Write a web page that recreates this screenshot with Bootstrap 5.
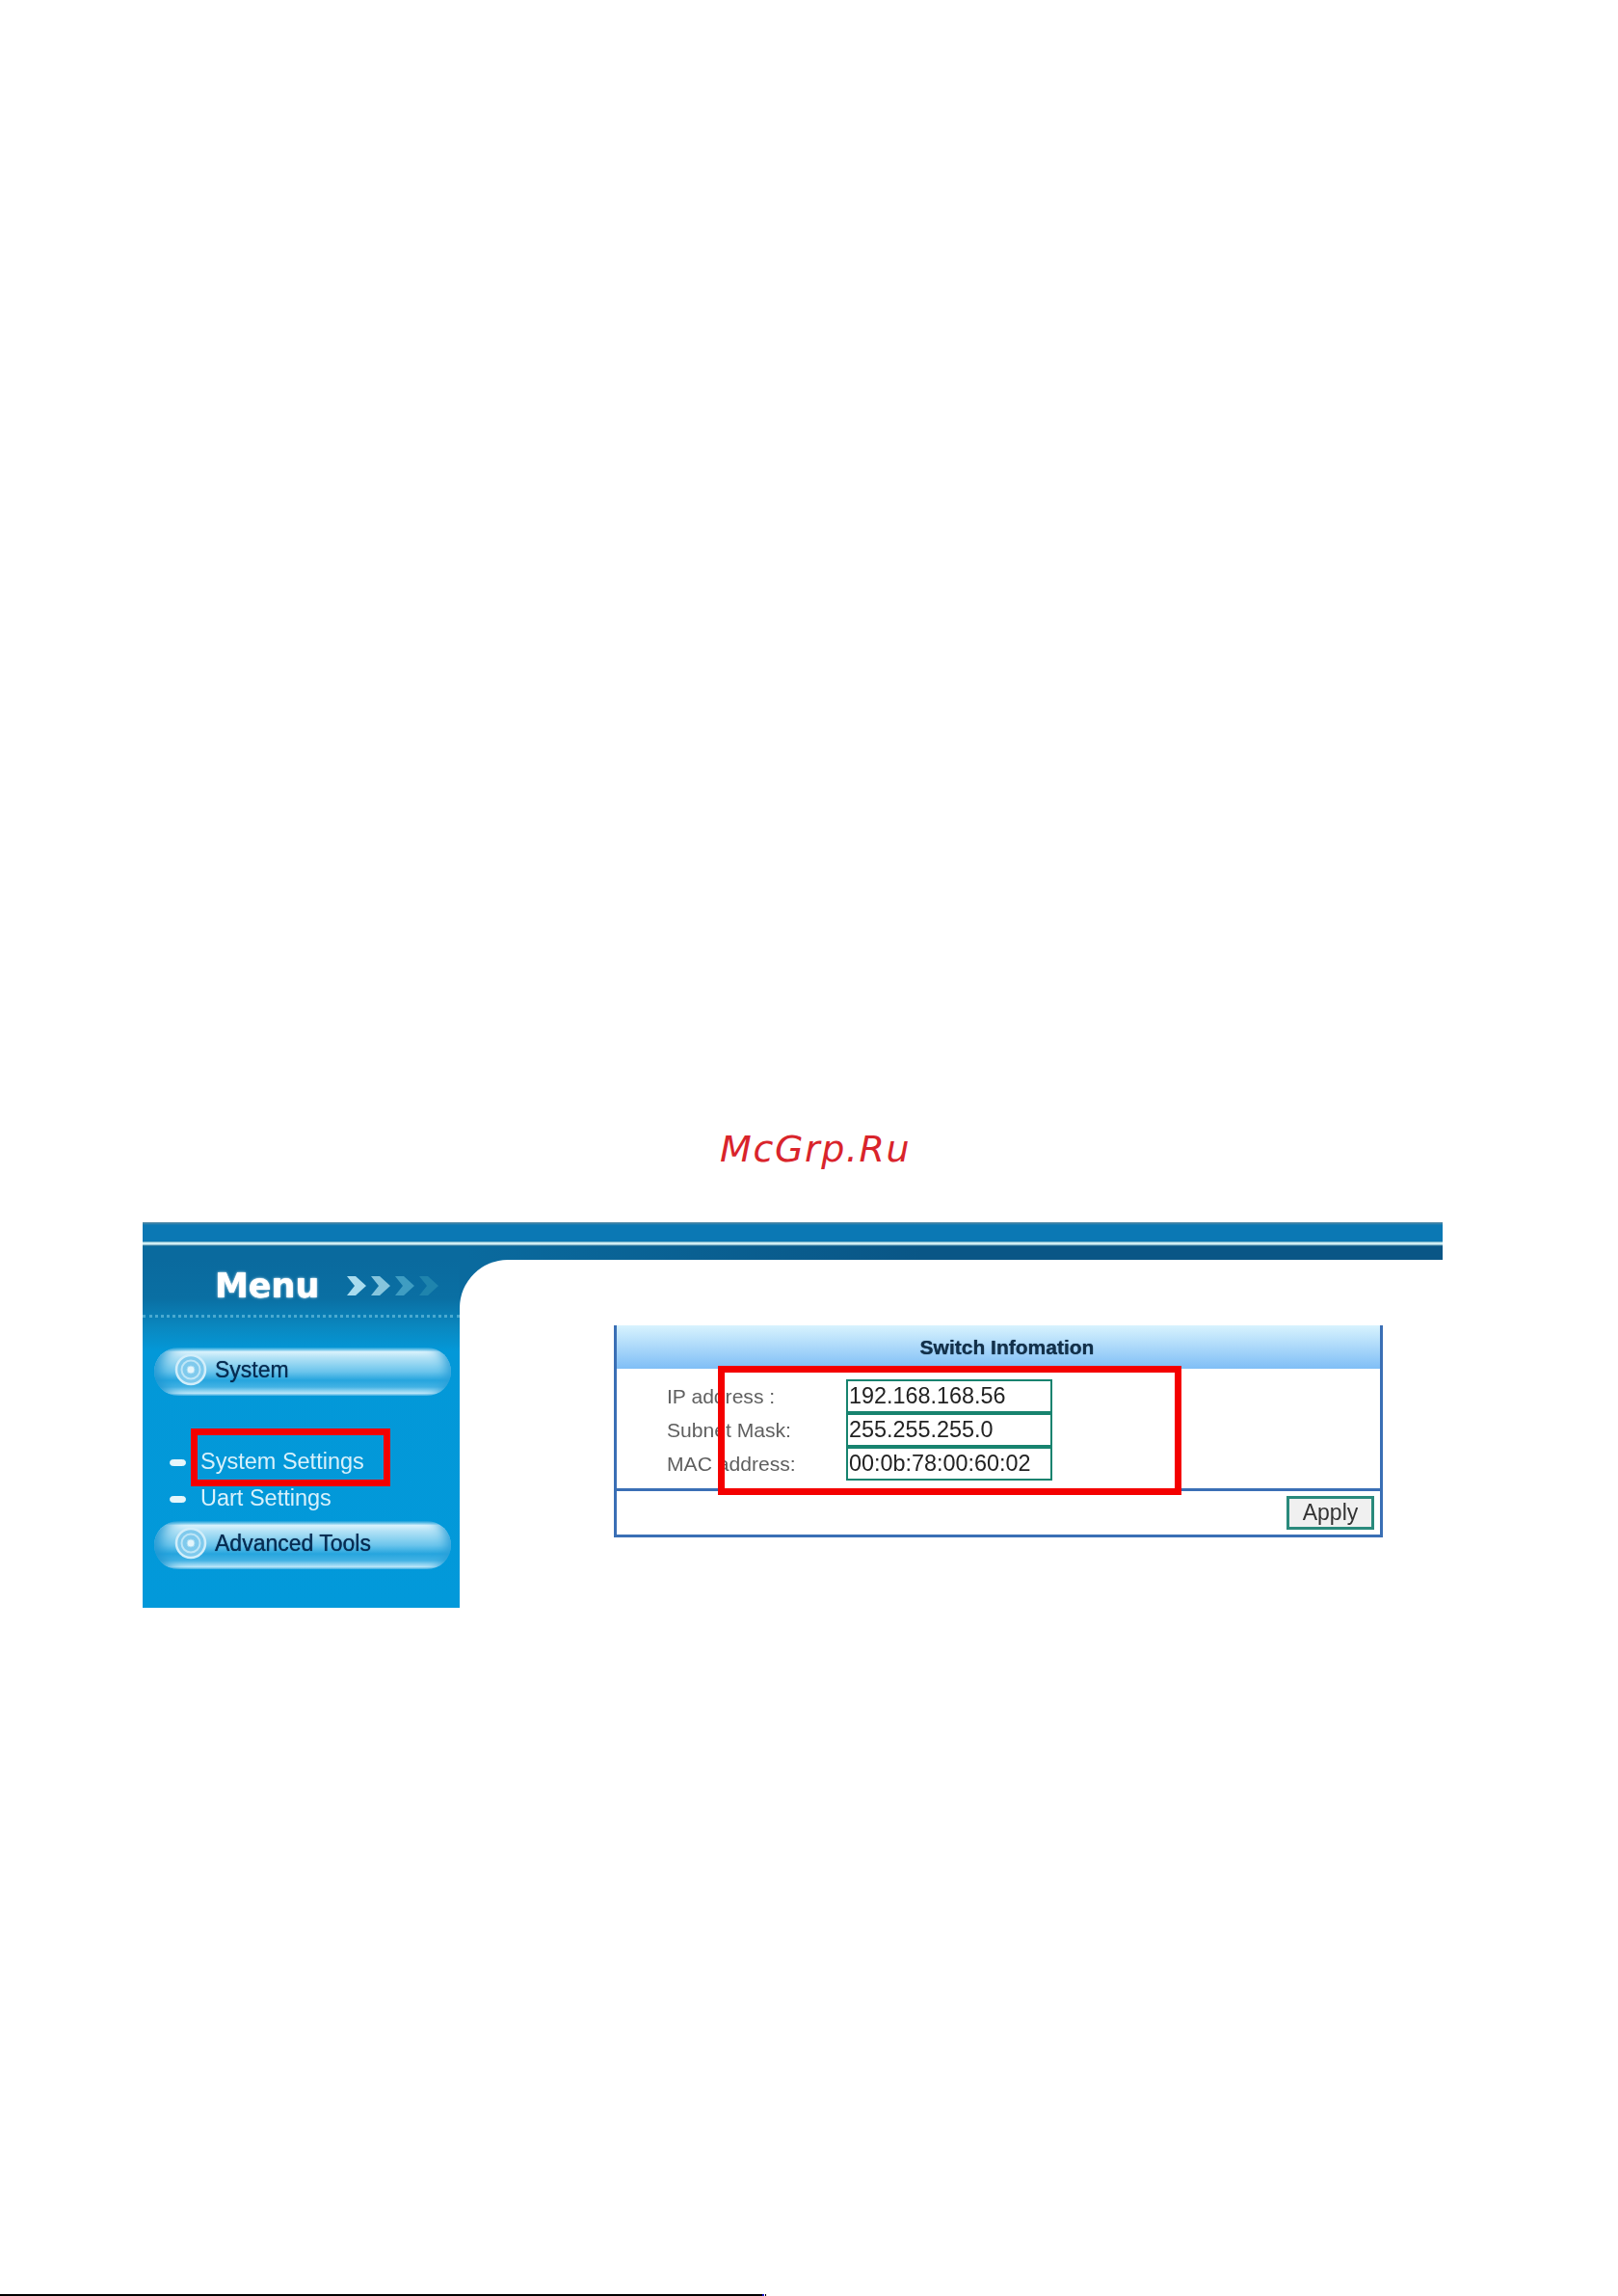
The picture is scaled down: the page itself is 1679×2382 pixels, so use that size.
<!DOCTYPE html>
<html lang="en">
<head>
<meta charset="utf-8">
<title>Switch Information</title>
<link href="https://cdn.jsdelivr.net/npm/bootstrap@5.3.0/dist/css/bootstrap.min.css" rel="stylesheet">
<style>
html,body{height:2382px;overflow:hidden;background:#fff}
body{font-family:"Liberation Sans",Arial,sans-serif}
.sheet{height:2382px}
.wm-row{height:1268px;padding-top:1167px;padding-left:747px}
.wm-text{font-family:"DejaVu Sans",sans-serif;font-style:oblique;font-size:38px;line-height:50px;letter-spacing:1.6px;color:#d9242b}
.shot{margin-left:148px;width:1349px;height:400px;filter:blur(.55px)}
.top-band{height:39px;background:
  linear-gradient(to bottom,#5d8ba3 0,rgba(93,139,163,0) 3px),
  linear-gradient(to bottom,transparent 20px,#2f7ea5 20px,#c9ecf3 21px,#d5f0f6 23px,#3f7fa0 24px,transparent 25px),
  linear-gradient(to bottom,#0b78b4 0,#0b78b4 20px,transparent 20px),
  linear-gradient(to right,#0a6a9e 0,#0a6a9e 25%,#0a5686 60%,#0a5686 100%)}
.side{width:329px;height:361px;background:linear-gradient(to bottom,#0a6a9e 0,#0a6fa3 40px,#0a88c0 70px,#0398d8 95px,#0299da 100%)}
.side-head{height:60px;padding-left:75px;border-bottom:3px dotted #4aa9d0;padding-bottom:3px}
.menu-word{font-family:"DejaVu Sans",sans-serif;font-weight:700;font-size:35px;line-height:1;color:#fff;text-shadow:0 0 1px #fff,0 0 3px #cfe6f0;width:136px;filter:blur(.4px)}
.chev{width:23px;height:24px;margin-right:2px}
.gloss{margin-left:12px;width:308px;height:50px;border-radius:25px;padding:0 0 4px 21px;gap:8px;font-size:23px;color:#062c52;background:linear-gradient(to bottom,#16a0da 0,#d9f2fc 9%,#b5e3f6 20%,#6cc5ec 50%,#26a5de 68%,#43b2e4 82%,#bfe8f9 95%,#3fb0e2 100%);box-shadow:inset 16px 0 14px -10px #1f97d2,inset -14px 0 12px -10px #2a9fd8}
.gloss-first{margin-top:31px}
.gloss-label{filter:blur(.5px);text-shadow:0 0 1px #062c52}
.tree{margin-top:50px}
.tree-row{height:38px;padding-left:28px;font-size:23.5px;color:#d8f1fb}
.tree-label{filter:blur(.5px)}
.tree-dot{width:17px;height:7px;border-radius:4px;background:#e6f6fb;border:1.5px solid #e6f6fb;margin-right:15px}
.red-frame{position:absolute;border:7px solid #f40000;pointer-events:none}
.frame-menu{left:50px;top:-16px;width:207px;height:60px}
.main-wrap{background:#0a6a9e;height:361px}
.main-pane{height:361px;background:#fff;border-top-left-radius:50px;padding:68px 0 0 160px}
.info-card{width:798px;height:220px;border:3px solid #3a6fb5;border-top:0;border-radius:0;background:#fff}
.info-head{height:45px;padding:0 0 0 18px;border:0;border-radius:0!important;background:linear-gradient(to bottom,#d8f3fe 0,#7fbef6 100%);font-weight:700;font-size:21px;color:#12304a}
.info-head-text{filter:blur(.5px);text-shadow:0 0 1px #12304a}
.info-body{height:124px;padding:11px 0 0 52px;flex:none}
.info-line{height:35px}
.info-label{width:186px;font-size:21.1px;color:#5f5f5f;filter:blur(.5px)}
.info-value{width:214px;height:35px;border:2px solid #17836f;border-radius:0;padding:0 1px;font-size:23.4px;line-height:31px;color:#222}
.info-digits{display:block;filter:blur(.5px)}
.info-foot{height:48px;padding:5px 6px 0 0;border-top:3px solid #3a6fb5;border-radius:0!important;background:#fff;flex:none}
.apply-btn{width:91px;height:35px;padding:0;border:3px solid #2a8a7c;border-radius:0;background:#f0f0f0;color:#333;font-size:23px;line-height:27px}
.apply-text{display:block;filter:blur(.5px)}
.frame-info{left:105px;top:42px;width:481px;height:134px}
.foot-line{height:2px}
.foot-black{width:791px;background:#000}
.foot-blue{width:2px;background:#1a1ad0}
.foot-gap{width:1px}
.foot-tick{width:1px;background:#000}
</style>
</head>
<body>
<div class="sheet d-flex flex-column">
  <div class="wm-row"><span class="wm-text">McGrp.Ru</span></div>
  <div class="shot">
    <div class="top-band"></div>
    <div class="d-flex">
      <aside class="side flex-shrink-0">
        <div class="side-head d-flex align-items-center">
          <span class="menu-word">Menu</span>
          <svg class="chev" viewBox="0 0 23 24"><path d="M1 2h9l11 10-11 10H1l8-10z" fill="#a9dcee"/></svg>
          <svg class="chev" viewBox="0 0 23 24"><path d="M1 2h9l11 10-11 10H1l8-10z" fill="#86c5dd"/></svg>
          <svg class="chev" viewBox="0 0 23 24"><path d="M1 2h9l11 10-11 10H1l8-10z" fill="#3f9dc2"/></svg>
          <svg class="chev" viewBox="0 0 23 24"><path d="M1 2h9l11 10-11 10H1l8-10z" fill="#1f84ad"/></svg>
        </div>
        <div class="gloss gloss-first d-flex align-items-center">
          <svg width="34" height="34" viewBox="0 0 34 34"><circle cx="17" cy="17" r="15" fill="#7fcaed" stroke="#d2eefa" stroke-width="2.5"/><circle cx="17" cy="17" r="9.5" fill="none" stroke="#bfe6f7" stroke-width="2"/><circle cx="17" cy="17" r="4" fill="#e4f6fc" stroke="#a8dcf3" stroke-width="1"/></svg>
          <span class="gloss-label">System</span>
        </div>
        <div class="tree">
          <div class="tree-row d-flex align-items-center position-relative">
            <span class="tree-dot"></span><span class="tree-label">System Settings</span>
            <span class="red-frame frame-menu"></span>
          </div>
          <div class="tree-row d-flex align-items-center">
            <span class="tree-dot"></span><span class="tree-label">Uart Settings</span>
          </div>
        </div>
        <div class="gloss d-flex align-items-center mt-1">
          <svg width="34" height="34" viewBox="0 0 34 34"><circle cx="17" cy="17" r="15" fill="#7fcaed" stroke="#d2eefa" stroke-width="2.5"/><circle cx="17" cy="17" r="9.5" fill="none" stroke="#bfe6f7" stroke-width="2"/><circle cx="17" cy="17" r="4" fill="#e4f6fc" stroke="#a8dcf3" stroke-width="1"/></svg>
          <span class="gloss-label">Advanced Tools</span>
        </div>
      </aside>
      <div class="main-wrap flex-grow-1">
        <div class="main-pane">
          <div class="card info-card position-relative">
            <div class="card-header info-head d-flex align-items-center justify-content-center"><span class="info-head-text">Switch Infomation</span></div>
            <div class="card-body info-body">
              <div class="info-line d-flex align-items-center"><span class="info-label">IP address :</span><div class="info-value"><span class="info-digits">192.168.168.56</span></div></div>
              <div class="info-line d-flex align-items-center"><span class="info-label">Subnet Mask:</span><div class="info-value"><span class="info-digits">255.255.255.0</span></div></div>
              <div class="info-line d-flex align-items-center"><span class="info-label">MAC address:</span><div class="info-value"><span class="info-digits">00:0b:78:00:60:02</span></div></div>
            </div>
            <div class="card-footer info-foot d-flex justify-content-end align-items-start">
              <button type="button" class="btn apply-btn"><span class="apply-text">Apply</span></button>
            </div>
            <span class="red-frame frame-info"></span>
          </div>
        </div>
      </div>
    </div>
  </div>
  <div class="foot-line d-flex mt-auto">
    <span class="foot-black"></span><span class="foot-blue"></span><span class="foot-gap"></span><span class="foot-tick"></span>
  </div>
</div>
<script src="https://cdn.jsdelivr.net/npm/bootstrap@5.3.0/dist/js/bootstrap.bundle.min.js"></script>
</body>
</html>
